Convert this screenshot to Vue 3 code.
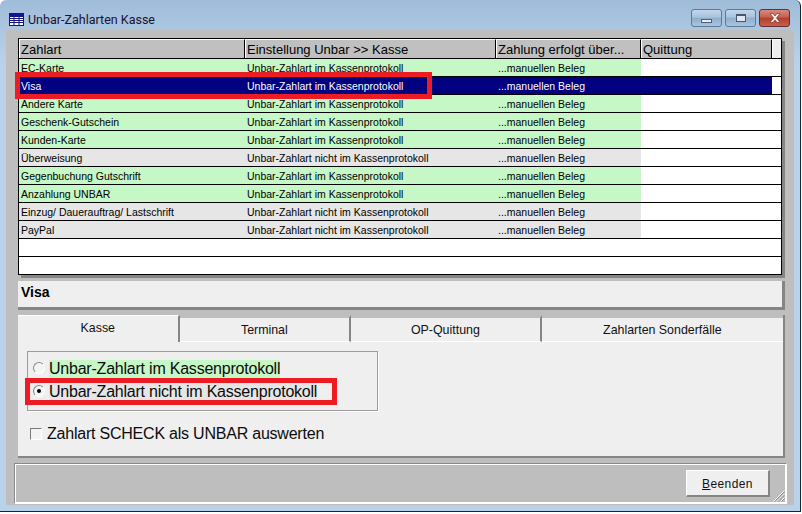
<script setup>
const columns = ['Zahlart', 'Einstellung Unbar >> Kasse', 'Zahlung erfolgt über...', 'Quittung']

const IM = 'Unbar-Zahlart im Kassenprotokoll'
const NICHT = 'Unbar-Zahlart nicht im Kassenprotokoll'

const rows = [
  { name: 'EC-Karte', mode: IM },
  { name: 'Visa', mode: IM, selected: true },
  { name: 'Andere Karte', mode: IM },
  { name: 'Geschenk-Gutschein', mode: IM },
  { name: 'Kunden-Karte', mode: IM },
  { name: 'Überweisung', mode: NICHT },
  { name: 'Gegenbuchung Gutschrift', mode: IM },
  { name: 'Anzahlung UNBAR', mode: IM },
  { name: 'Einzug/ Dauerauftrag/ Lastschrift', mode: NICHT },
  { name: 'PayPal', mode: NICHT },
  { name: '', mode: '' },
  { name: '', mode: '' },
]

const tabs = [
  { label: 'Kasse', width: 162, active: true },
  { label: 'Terminal', width: 172 },
  { label: 'OP-Quittung', width: 191 },
  { label: 'Zahlarten Sonderfälle', width: 242 },
]
</script>

<template>
  <div class="window">
    <div class="titlebar">
      <svg class="app-icon" width="15" height="13" viewBox="0 0 15 13">
        <rect x="0.5" y="0.5" width="14" height="12" fill="#fff" stroke="#14147c" />
        <rect x="0.5" y="0.5" width="14" height="3" fill="#14149c" stroke="#14147c" />
        <path d="M1 5.5h13M1 7.5h13M1 9.5h13M5 4v8M10 4v8" stroke="#14147c" fill="none" />
      </svg>
      <span class="title">Unbar-Zahlarten Kasse</span>
      <div class="caption-buttons">
        <div class="cap-btn"><span class="glyph-min"></span></div>
        <div class="cap-btn"><span class="glyph-max"></span></div>
        <div class="cap-btn close">
          <svg width="16" height="12" viewBox="0 0 16 12">
            <path d="M3 1.5h3l2 2.5 2-2.5h3l-3.5 4.5 3.5 4.5h-3l-2-2.5-2 2.5h-3l3.5-4.5z" fill="#f4ecea" stroke="#7d3a30" stroke-width="0.7" />
          </svg>
        </div>
      </div>
    </div>

    <div class="client">
      <div class="grid">
        <div class="grid-head">
          <div v-for="c in columns" :key="c" class="head-cell">{{ c }}</div>
          <div class="head-cell corner"></div>
        </div>
        <div
          v-for="(r, i) in rows"
          :key="i"
          class="grid-row"
          :class="{ selected: r.selected, green: r.mode === IM, gray: r.mode === NICHT }"
        >
          <div class="cell">{{ r.name }}</div>
          <div class="cell">{{ r.mode }}</div>
          <div class="cell">{{ r.mode ? '...manuellen Beleg' : '' }}</div>
          <div class="cell last"></div>
        </div>
      </div>

      <div class="info-panel">Visa</div>

      <div class="tab-pane">
        <div class="tabs">
          <div
            v-for="t in tabs"
            :key="t.label"
            class="tab"
            :class="{ active: t.active }"
            :style="{ width: t.width + 'px' }"
          >{{ t.label }}</div>
        </div>
        <div class="tab-body">
          <div class="group">
            <div class="radio-row">
              <span class="radio"></span>
              <span class="radio-label green-label">Unbar-Zahlart im Kassenprotokoll</span>
            </div>
            <div class="radio-row second">
              <span class="radio checked"></span>
              <span class="radio-label gray-label">Unbar-Zahlart nicht im Kassenprotokoll</span>
            </div>
          </div>
          <div class="check-row">
            <span class="checkbox"></span>
            <span>Zahlart SCHECK als UNBAR auswerten</span>
          </div>
        </div>
      </div>

      <div class="footer">
        <button type="button" class="end-btn"><u>B</u>eenden</button>
        <svg class="grip" width="12" height="12" viewBox="0 0 12 12">
          <path d="M0.5 11.5L11.5 0.5M4 11.5L11.5 4M7.5 11.5L11.5 7.5" stroke="#fff" fill="none" />
          <path d="M1.5 11.5L11.5 1.5M5 11.5L11.5 5M8.5 11.5L11.5 8.5" stroke="#8a8a8a" fill="none" />
        </svg>
      </div>
    </div>

    <!-- annotations drawn on top of the screenshot -->
    <div class="mark mark-row"></div>
    <div class="mark mark-radio"></div>
  </div>
</template>

<style>
html, body { margin: 0; background: #fff; }
</style>

<style scoped>
.window {
  position: relative;
  width: 801px;
  height: 512px;
  box-sizing: border-box;
  padding: 0 6px 6px 6px;
  background: linear-gradient(#9fbcd8 0, #b9d1ea 60px);
  border-radius: 6px 6px 0 0;
  border-right: 1px solid #0b2b33;
  border-bottom: 1px solid #0b2b33;
  font-family: "Liberation Sans", Arial, sans-serif;
  color: #000;
  overflow: hidden;
}

.titlebar {
  height: 30px;
  display: flex;
  align-items: center;
  padding-left: 3px;
}
.app-icon { margin-right: 4px; margin-top: 8px; }
.title {
  font-family: Roboto, "Liberation Sans", sans-serif;
  font-size: 12.5px;
  color: #1a1030;
  margin-top: 8px;
}
.caption-buttons {
  margin-left: auto;
  display: flex;
  gap: 3px;
  margin-right: 4px;
  margin-top: 6px;
}
.cap-btn {
  width: 31px;
  height: 18px;
  box-sizing: border-box;
  border: 1px solid #5f7894;
  border-radius: 3px;
  background: linear-gradient(#c3d6e9 0, #a9c3dd 45%, #8faecd 50%, #a8c4e0 100%);
  display: flex;
  align-items: center;
  justify-content: center;
}
.cap-btn.close {
  border-color: #6d2d26;
  background: linear-gradient(#d98a7c 0, #c6604f 45%, #b13f2e 50%, #c7604c 100%);
}
.glyph-min {
  width: 9px;
  height: 2px;
  margin-top: 5px;
  background: #e9eef4;
  border: 1px solid #4f6179;
}
.glyph-max {
  width: 8px;
  height: 5px;
  background: #dfe7f0;
  border: 1px solid #45566e;
  border-top-width: 2px;
}

.client {
  height: 475px;
  box-sizing: border-box;
  background: #bebebe;
  padding: 8px 9px 0 12px;
}

.grid {
  width: 764px;
  height: 237px;
  box-sizing: border-box;
  border: 1px solid #000;
  background: #fff;
  box-shadow: 3px 3px 0 #858585;
  font-size: 10.5px;
  overflow: hidden;
}
.grid-head {
  display: grid;
  grid-template-columns: 226px 251px 145px 131px 1fr;
  height: 20px;
  border-bottom: 1px solid #000;
  box-sizing: border-box;
}
.head-cell {
  background: #c0c0c0;
  border-left: 1px solid #fff;
  border-top: 1px solid #fff;
  border-right: 1px solid #000;
  font-size: 13px;
  line-height: 19px;
  padding-left: 1px;
  white-space: nowrap;
  overflow: hidden;
}
.head-cell.corner { background: #efefef; border-right: 0; }
.grid-row {
  display: grid;
  grid-template-columns: 226px 251px 145px 1fr;
  height: 18px;
  box-sizing: border-box;
  border-bottom: 1px solid #000;
  line-height: 18px;
}
.grid-row:last-child { border-bottom: 0; }
.cell {
  padding-left: 2px;
  white-space: nowrap;
  overflow: hidden;
}
.green .cell { background: #c6f7c6; }
.gray .cell { background: #e6e6e6; }
.cell.last { background: #fff !important; }
.grid-row.selected .cell { background: #000080; color: #fff; }
.grid-row.selected .cell.last {
  background: linear-gradient(to right, #000080 131px, #fff 131px) !important;
}

.info-panel {
  width: 767px;
  height: 29px;
  box-sizing: border-box;
  margin-top: 6px;
  background: #efefef;
  border-right: 3px solid #858585;
  border-bottom: 3px solid #858585;
  font-size: 14px;
  font-weight: 700;
  line-height: 22px;
  padding-left: 3px;
}

.tab-pane {
  width: 767px;
  margin-top: 5px;
  box-sizing: border-box;
  border-right: 2px solid #858585;
  border-bottom: 2px solid #858585;
  background: #efefef;
}
.tabs { display: flex; height: 27px; background: #bebebe; }
.tab {
  box-sizing: border-box;
  height: 27px;
  background: #efefef;
  border-top: 3px solid #bebebe;
  border-right: 2px solid #858585;
  border-bottom: 1px solid #fff;
  font-size: 12.4px;
  color: #111;
  text-align: center;
  line-height: 24px;
}
.tab.active {
  border-bottom: 0;
  border-top: 1px solid #fff;
  line-height: 24px;
}
.tab:last-child { border-right: 0; }

.tab-body {
  height: 114px;
  padding: 9px 0 0 9px;
  box-sizing: border-box;
}

.group {
  width: 351px;
  height: 60px;
  box-sizing: border-box;
  border: 1px solid #9c9c9c;
  box-shadow: 1px 1px 0 #fff;
  padding: 8px 0 0 5px;
}
.radio-row {
  display: flex;
  align-items: flex-start;
  height: 18px;
}
.radio-row.second { margin-top: 5px; }
.radio {
  width: 12px;
  height: 12px;
  box-sizing: border-box;
  margin: 2px 4px 0 0;
  border-radius: 50%;
  border: 1px solid #8a8a8a;
  border-right-color: #fff;
  border-bottom-color: #fff;
  background: #f4f4f4;
  position: relative;
  flex: none;
}
.radio.checked::after {
  content: '';
  position: absolute;
  left: 3px;
  top: 3px;
  width: 4px;
  height: 4px;
  border-radius: 50%;
  background: #000;
}
.radio-label {
  font-size: 16px;
  letter-spacing: -0.22px;
  line-height: 18px;
  white-space: nowrap;
  color: #0c0c0c;
}
.green-label { background: #c6f7c6; }
.gray-label { background: #e6e6e6; }

.check-row {
  display: flex;
  align-items: center;
  gap: 5px;
  margin: 14px 0 0 3px;
  font-size: 16px;
  letter-spacing: -0.22px;
  line-height: 18px;
  white-space: nowrap;
  color: #0c0c0c;
}
.checkbox {
  width: 12px;
  height: 12px;
  box-sizing: border-box;
  border: 1px solid #7a7a7a;
  border-right-color: #fff;
  border-bottom-color: #fff;
  background: #f4f4f4;
  flex: none;
}

.footer {
  position: relative;
  width: 773px;
  height: 41px;
  margin: 5px 0 0 -4px;
  box-sizing: border-box;
  border: 1px solid #fff;
  border-left-color: #8a8a8a;
  border-top-color: #8a8a8a;
  outline: 1px solid #fff;
  outline-offset: -2px;
  display: flex;
  justify-content: flex-end;
  align-items: flex-start;
  padding: 6px 16px 0 0;
}
.end-btn {
  width: 84px;
  height: 27px;
  padding: 1px 0 0;
  box-sizing: border-box;
  background: #efefef;
  border: 0;
  border-top: 1px solid #fff;
  border-left: 1px solid #fff;
  border-right: 2px solid #858585;
  border-bottom: 2px solid #858585;
  font-family: "Liberation Sans", Arial, sans-serif;
  font-size: 12px;
  letter-spacing: 0.4px;
  color: #111;
}
.grip { position: absolute; right: 1px; bottom: 1px; }

.mark {
  position: absolute;
  box-sizing: border-box;
  border: 5px solid #ed1c24;
  pointer-events: none;
}
.mark-row { left: 15px; top: 72px; width: 417px; height: 27px; }
.mark-radio { left: 25px; top: 378px; width: 312px; height: 27px; }
</style>
